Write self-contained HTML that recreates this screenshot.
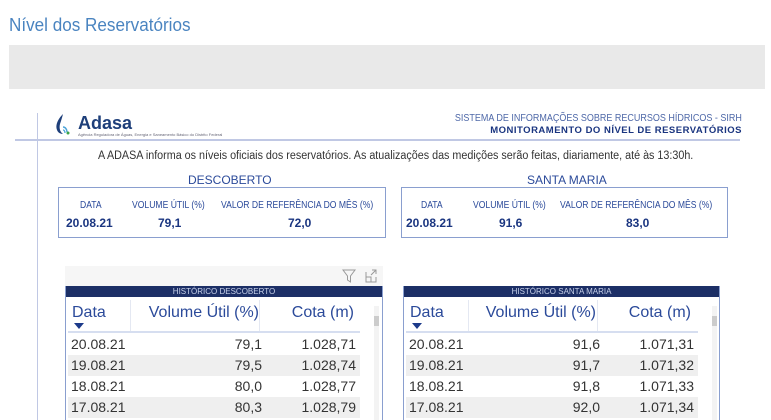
<!DOCTYPE html>
<html><head><meta charset="utf-8"><style>
*{margin:0;padding:0;box-sizing:border-box}
body{width:771px;height:420px;overflow:hidden;background:#fff;font-family:"Liberation Sans",sans-serif;position:relative}
.a{position:absolute;white-space:nowrap}
.box{position:absolute;border:1.5px solid #8a9fcf;top:187px;height:51px}
.lbl{font-size:10px;color:#2b4a9a;top:200px;transform:scaleX(.86);transform-origin:left}
.val{font-size:12px;font-weight:bold;color:#1a3580;top:216px}
.tbl{position:absolute;top:286px;border-left:1px solid #8a9fcf;border-right:1px solid #8a9fcf;height:134px;background:#fff}
.bar{height:11px;background:#1c2f66;color:#c8d2ea;font-size:8px;text-align:center;line-height:11px}
.hd{position:absolute;top:18px;font-size:16px;color:#2b4a9a}
.row{position:absolute;left:2px;width:292px;height:21px;font-size:14px;color:#333;line-height:21px}
.row span{position:absolute}
.g{background:#efefef}
</style></head><body>
<div class="a" style="left:9px;top:15px;font-size:18px;color:#4a84c0;transform:scaleX(.95);transform-origin:left">Nível dos Reservatórios</div>
<div class="a" style="left:9px;top:45px;width:756px;height:44px;background:#e9e9e9"></div>
<div class="a" style="left:37px;top:113px;width:1px;height:307px;background:#c0c8e4"></div>
<div class="a" style="left:15px;top:139px;width:725px;height:1.5px;background:#c0c8e4"></div>
<svg class="a" style="left:54px;top:113px" width="16" height="22" viewBox="0 0 16 22"><path d="M9 1C4 6 1 12 3 17c1 3 4 4 6 4-3-2-4-6-3-10 1-3 2-6 3-10z" fill="#1e3f7a"/><path d="M9 14c2 0 4 2 4 5" stroke="#4aa3d8" stroke-width="1.5" fill="none"/><path d="M9 17c1 0 2 1 2 3" stroke="#4aa3d8" stroke-width="1.3" fill="none"/><circle cx="14" cy="20" r="1.5" fill="#3aa34a"/></svg>
<div class="a" style="left:78px;top:113px;font-size:18px;font-weight:bold;color:#1e3f7a">Adasa</div>
<div class="a" style="left:78px;top:132px;font-size:4px;color:#667">Agência Reguladora de Águas, Energia e Saneamento Básico do Distrito Federal</div>
<div class="a" style="right:29px;top:113px;font-size:10px;color:#4e68a8;transform:scaleX(.9);transform-origin:right">SISTEMA DE INFORMAÇÕES SOBRE RECURSOS HÍDRICOS - SIRH</div>
<div class="a" style="right:29px;top:125px;font-size:9.5px;font-weight:bold;color:#1a3580;letter-spacing:.5px">MONITORAMENTO DO NÍVEL DE RESERVATÓRIOS</div>
<div class="a" style="left:98px;top:150px;font-size:11.5px;color:#333;transform:scaleX(.935);transform-origin:left">A ADASA informa os níveis oficiais dos reservatórios. As atualizações das medições serão feitas, diariamente, até às 13:30h.</div>
<div class="a" style="left:188px;top:173px;font-size:12px;color:#2b4a9a">DESCOBERTO</div>
<div class="a" style="left:527px;top:173px;font-size:12px;color:#2b4a9a">SANTA MARIA</div>
<div class="box" style="left:58px;width:328px"></div>
<div class="box" style="left:401px;width:327px"></div>
<div class="a lbl" style="left:80px">DATA</div>
<div class="a lbl" style="left:132px">VOLUME ÚTIL (%)</div>
<div class="a lbl" style="left:221px">VALOR DE REFERÊNCIA DO MÊS (%)</div>
<div class="a val" style="left:66px">20.08.21</div>
<div class="a val" style="left:158px">79,1</div>
<div class="a val" style="left:288px">72,0</div>
<div class="a lbl" style="left:421px">DATA</div>
<div class="a lbl" style="left:473px">VOLUME ÚTIL (%)</div>
<div class="a lbl" style="left:560px">VALOR DE REFERÊNCIA DO MÊS (%)</div>
<div class="a val" style="left:406px">20.08.21</div>
<div class="a val" style="left:499px">91,6</div>
<div class="a val" style="left:626px">83,0</div>
<div class="a" style="left:65px;top:266px;width:318px;height:20px;background:#f6f6f6"></div>
<svg class="a" style="left:342px;top:269px" width="40" height="14" viewBox="0 0 40 14"><path d="M1 1h12L8.5 7v6L5.5 11V7z" fill="none" stroke="#999" stroke-width="1"/><path d="M24 3v10h10V8M24 8h5v5M30 1h4v4M34 1l-5 5" fill="none" stroke="#999" stroke-width="1"/></svg>
<div class="tbl" style="left:65px;width:318px">
<div class="bar">HISTÓRICO DESCOBERTO</div>
<div class="hd" style="left:6px">Data</div>
<div class="hd" style="right:123px">Volume Útil (%)</div>
<div class="hd" style="right:28px">Cota (m)</div>
<div class="a" style="left:8px;top:37px;border:5px solid transparent;border-top:6px solid #1c3a8a;border-bottom:0"></div>
<div class="a" style="left:64px;top:14px;width:1px;height:32px;background:#e4e8f2"></div>
<div class="a" style="left:193px;top:14px;width:1px;height:32px;background:#e4e8f2"></div>
<div class="a" style="left:2px;top:45px;width:292px;height:2px;background:#d6def0"></div>
<div class="a" style="left:308px;top:20px;width:5px;height:114px;background:#f3f3f3"></div>
<div class="a" style="left:308px;top:30px;width:5px;height:10px;background:#ccc"></div>
<div class="row" style="top:48px"><span style="left:3px">20.08.21</span><span style="right:98px">79,1</span><span style="right:4px">1.028,71</span></div>
<div class="row g" style="top:69px"><span style="left:3px">19.08.21</span><span style="right:98px">79,5</span><span style="right:4px">1.028,74</span></div>
<div class="row" style="top:90px"><span style="left:3px">18.08.21</span><span style="right:98px">80,0</span><span style="right:4px">1.028,77</span></div>
<div class="row g" style="top:111px"><span style="left:3px">17.08.21</span><span style="right:98px">80,3</span><span style="right:4px">1.028,79</span></div>
</div>
<div class="tbl" style="left:403px;width:317px">
<div class="bar">HISTÓRICO SANTA MARIA</div>
<div class="hd" style="left:6px">Data</div>
<div class="hd" style="right:123px">Volume Útil (%)</div>
<div class="hd" style="right:28px">Cota (m)</div>
<div class="a" style="left:8px;top:37px;border:5px solid transparent;border-top:6px solid #1c3a8a;border-bottom:0"></div>
<div class="a" style="left:64px;top:14px;width:1px;height:32px;background:#e4e8f2"></div>
<div class="a" style="left:193px;top:14px;width:1px;height:32px;background:#e4e8f2"></div>
<div class="a" style="left:2px;top:45px;width:292px;height:2px;background:#d6def0"></div>
<div class="a" style="left:308px;top:20px;width:5px;height:114px;background:#f3f3f3"></div>
<div class="a" style="left:308px;top:30px;width:5px;height:10px;background:#ccc"></div>
<div class="row" style="top:48px"><span style="left:3px">20.08.21</span><span style="right:98px">91,6</span><span style="right:4px">1.071,31</span></div>
<div class="row g" style="top:69px"><span style="left:3px">19.08.21</span><span style="right:98px">91,7</span><span style="right:4px">1.071,32</span></div>
<div class="row" style="top:90px"><span style="left:3px">18.08.21</span><span style="right:98px">91,8</span><span style="right:4px">1.071,33</span></div>
<div class="row g" style="top:111px"><span style="left:3px">17.08.21</span><span style="right:98px">92,0</span><span style="right:4px">1.071,34</span></div>
</div>
</body></html>
